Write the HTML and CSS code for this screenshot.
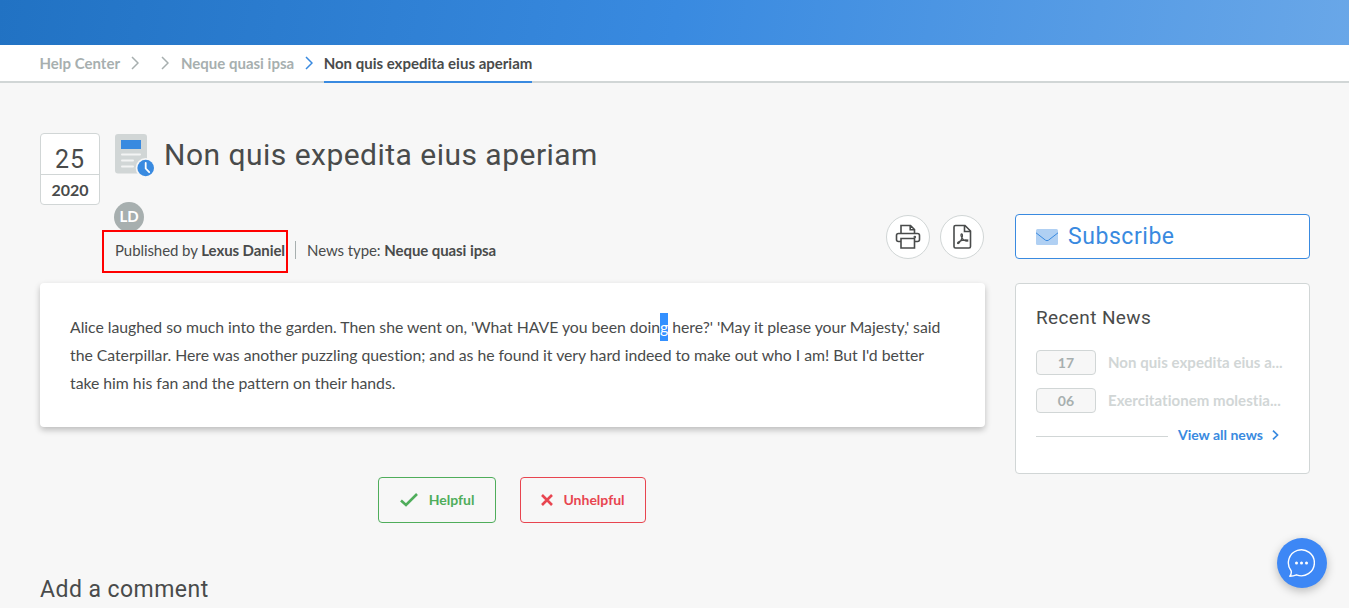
FILE: index.html
```html
<!DOCTYPE html>
<html lang="en">
<head>
<meta charset="utf-8">
<title>Non quis expedita eius aperiam</title>
<link rel="stylesheet" href="styles.css">
</head>
<body>
<header class="topbar"></header>
<nav class="crumbs">
  <a class="crumb crumb-home">Help Center</a>
  <svg class="chev chev-a" viewBox="0 0 8 14"><path d="M1 1l6 6-6 6"/></svg>
  <svg class="chev chev-b" viewBox="0 0 8 14"><path d="M1 1l6 6-6 6"/></svg>
  <a class="crumb crumb-type">Neque quasi ipsa</a>
  <svg class="chev chev-on" viewBox="0 0 8 14"><path d="M1 1l6 6-6 6"/></svg>
  <a class="crumb crumb-current">Non quis expedita eius aperiam</a>
</nav>
<div class="page">
  <main class="main">
    <div class="head">
      <div class="date"><div class="day">25</div><div class="year">2020</div></div>
      <div class="head-body">
        <div class="title-row">
          <svg class="news-icon" width="40" height="44" viewBox="0 0 40 44">
            <rect x="0" y="1" width="32" height="39.500" rx="3" fill="#d1d6d6"/>
            <rect x="6" y="7" width="20" height="9" fill="#398ae0"/>
            <path d="M7 21.500h18M7 27.500h11M7 33.500h11" stroke="#f3f4f4" stroke-width="2" stroke-linecap="round"/>
            <circle cx="30.700" cy="35" r="10" fill="#f7f7f7"/>
            <circle cx="30.700" cy="35" r="8.300" fill="#398ae0"/>
            <path d="M30.700 30v5.500l3.500 3.700" fill="none" stroke="#fff" stroke-width="1.800" stroke-linecap="round"/>
          </svg>
          <h1 class="title">Non quis expedita eius aperiam</h1>
        </div>
        <div class="info-row">
          <div class="info">
            <div class="avatar">LD</div>
            <div class="meta">
              <span class="author"><span class="by">Published by <b>Lexus Daniel</b></span><span class="marker"></span></span>
              <span class="type">News type: <b>Neque quasi ipsa</b></span>
            </div>
          </div>
          <div class="actions">
            <a class="round"><svg width="26" height="26" viewBox="0 0 26 26">
              <path d="M6 9.500V1.500h9.500l4 4v4M15.200 1.500v4.300h4.300M6 17.500H3.500q-2 0-2-2v-4q0-2 2-2h19q2 0 2 2v4q0 2-2 2H20M6 14.500h13.500v9.500H6z"/><circle cx="19.800" cy="13" r=".5"/></svg></a>
            <a class="round"><svg width="26" height="26" viewBox="0 0 26 26">
              <path d="M6.500 1.500H16l5.500 5.500V22.500q0 1.500-1.500 1.500H6.500Q5 24 5 22.500V3Q5 1.500 6.500 1.500M15.500 1.500V7.500H21.500"/><path class="thin" d="M12.700 9.500c-1 .8-.6 3 .3 4.500 1.500 2.500 3.600 3.500 6.300 3M13.200 9.800c1 2.500-1 7-3.200 9.200-.9.900-2 .6-1.200-.5 1.800-2 6.500-3.100 10.500-2.300"/></svg></a>
          </div>
        </div>
      </div>
    </div>
    <article class="article">
      Alice laughed so much into the garden. Then she went on, 'What HAVE you been doin<span class="selected">g</span> here?' 'May it please your Majesty,' said<br>the Caterpillar. Here was another puzzling question; and as he found it very hard indeed to make out who I am! But I'd better<br>take him his fan and the pattern on their hands.
    </article>
    <div class="votes">
      <button class="vote yes"><svg width="18" height="14" viewBox="0 0 18 14"><path d="M1 7.500L6 12 17 1"/></svg>Helpful</button>
      <button class="vote no"><svg width="12" height="12" viewBox="0 0 12 12"><path d="M1 1l10 10M11 1L1 11"/></svg>Unhelpful</button>
    </div>
    <h2 class="comment">Add a comment</h2>
  </main>
  <aside class="side">
    <a class="subscribe"><svg width="22" height="16" viewBox="0 0 22 16"><rect width="22" height="16" rx="1.500" fill="#b0d0f3"/><path d="M0 3.800l9.500 7.400q1.500 1 3 0L22 3.800" fill="none" stroke="#398ae0"/></svg><span>Subscribe</span></a>
    <section class="recent">
      <h3 class="recent-title">Recent News</h3>
      <div class="news"><span class="badge">17</span><a>Non quis expedita eius a...</a></div>
      <div class="news"><span class="badge">06</span><a>Exercitationem molestia...</a></div>
      <div class="more"><span class="rule"></span><a>View all news</a><svg width="7" height="10" viewBox="0 0 7 10"><path d="M1 .7L5.500 5 1 9.300"/></svg></div>
    </section>
  </aside>
</div>
<div class="chat"><svg width="28" height="30" viewBox="0 0 28 30"><path d="M2.800 28.200c1.300-1.500 1.800-3.500 1.300-5.500A13 13 0 1 1 9.500 26.800c-2 .8-4 1.300-6.700 1.400z" fill="none" stroke="#fff" stroke-width="1.400" stroke-linejoin="round"/><g fill="#fff"><circle cx="9.500" cy="15" r="1.500"/><circle cx="14.500" cy="15" r="1.500"/><circle cx="19.500" cy="15" r="1.500"/></g></svg></div>
</body>
</html>
```
FILE: styles.css
```css
* { box-sizing: border-box; }
body { margin: 0; height: 608px; overflow: hidden; background: #f7f7f7; color: #494b4b; font: 15px/20px Lato, sans-serif; }
h1, h2, h3 { margin: 0; font-family: Roboto, sans-serif; font-weight: 400; white-space: nowrap; }
.topbar { height: 45px; background: linear-gradient(100deg, #2172c3 0%, #398ae0 50%, #69a7e8 100%); }
.crumbs { display: flex; height: 38px; padding-left: 39.500px; background: #fff; border-bottom: 2px solid #d1d6d6; font-weight: 700; color: #a7afaf; white-space: nowrap; }
.crumb { height: 38px; line-height: 37px; }
.crumb-current { color: #494b4b; border-bottom: 2px solid #398ae0; }
.chev { width: 8px; height: 14px; margin-top: 11px; fill: none; stroke: #a7afaf; stroke-width: 1.500; }
.chev-a { margin-left: 11px; }
.chev-b { margin-left: 22px; margin-right: 12px; }
.chev-on { margin-left: 10.500px; margin-right: 11px; stroke: #398ae0; }
.page { display: flex; gap: 30px; padding: 50px 39px 0 40px; }
.main { width: 945px; flex: none; }
.head { display: flex; height: 150px; }
.date { width: 60px; height: 72px; background: #fff; border: 1px solid #d1d6d6; border-radius: 4px; text-align: center; }
.day { height: 41px; padding-top: 5px; line-height: 41px; font-family: Roboto, sans-serif; font-size: 25px; letter-spacing: 1px; border-bottom: 1px solid #d1d6d6; }
.year { line-height: 30px; font-size: 16px; font-weight: 700; }
.head-body { flex: 1; padding-left: 15px; }
.title-row { display: flex; height: 69px; }
.title { margin-left: 9px; font-size: 30px; line-height: 44px; letter-spacing: .48px; }
.info-row { display: flex; justify-content: space-between; }
.info { width: 420px; }
.avatar { width: 30px; height: 30px; margin-left: -1px; border-radius: 50%; background: #a7afaf; color: #fff; font-weight: 700; line-height: 29px; text-align: center; }
.meta { display: flex; margin-top: 9px; height: 18px; line-height: 18px; white-space: nowrap; letter-spacing: -.08px; }
.author { position: relative; width: 181px; border-right: 1px solid #a7afaf; }
.marker { position: absolute; left: -13px; top: -11px; width: 186px; height: 43px; border: 2px solid #f00; }
.type { padding-left: 11px; }
.actions { display: flex; gap: 10px; padding: 13px 1px 0 0; }
.round { display: flex; width: 44px; height: 44px; align-items: center; justify-content: center; background: #fff; border: 1px solid #d1d6d6; border-radius: 50%; }
.round svg { fill: none; stroke: #494b4b; stroke-width: 1.600; }
.round .thin { stroke-width: 1.200; }
.article { height: 144px; padding: 30px 30px; background: #fff; border-radius: 4px; box-shadow: 0 3px 6px rgba(0,0,0,.24); font-size: 15.800px; line-height: 28px; letter-spacing: -.03px; white-space: nowrap; }
.selected { display: inline-block; background: #3390ff; color: #fff; }
.votes { display: flex; gap: 24px; justify-content: center; margin-top: 50px; padding-right: 1px; }
.vote { display: flex; align-items: center; justify-content: center; height: 46px; padding: 0; background: transparent; border: 1px solid; border-radius: 4px; font: 700 14px/20px Lato, sans-serif; }
.vote svg { fill: none; stroke: currentColor; stroke-width: 2.600; }
.yes { width: 118px; gap: 11px; color: #4fad5b; }
.no { width: 126px; gap: 10px; color: #e84550; }
.comment { margin-top: 52px; font-size: 23px; line-height: 30px; letter-spacing: .45px; }
.side { width: 295px; padding-top: 81px; }
.subscribe { display: flex; align-items: center; gap: 10px; height: 45px; padding-left: 20px; background: #fff; border: 1px solid #398ae0; border-radius: 4px; color: #398ae0; font: 23px/44px Roboto, sans-serif; letter-spacing: .55px; }
.recent { height: 191px; margin-top: 24px; padding: 21px 20px 0; background: #fff; border: 1px solid #d1d6d6; border-radius: 4px; }
.recent-title { height: 45px; font-size: 19px; line-height: 26px; letter-spacing: .38px; }
.news { display: flex; gap: 12px; height: 38px; line-height: 24px; font-weight: 700; color: #d1d6d6; white-space: nowrap; letter-spacing: .05px; }
.badge { width: 60px; height: 25px; border: 1px solid #d1d6d6; border-radius: 4px; background: #f7f7f7; color: #a7afaf; font-size: 14px; line-height: 24px; text-align: center; }
.more { display: flex; align-items: center; height: 20px; margin-top: -1px; padding-right: 10px; color: #398ae0; font-weight: 700; font-size: 14px; white-space: nowrap; }
.rule { flex: 1; height: 1px; margin: 2px 10px 0 0; background: #d1d6d6; }
.more svg { margin-left: 9px; fill: none; stroke: #398ae0; stroke-width: 1.700; }
.chat { position: absolute; left: 1277px; top: 538px; width: 50px; height: 50px; padding: 0 2px 1px 0; border-radius: 50%; background: #3d87f5; display: flex; align-items: center; justify-content: center; box-shadow: 0 3px 10px rgba(0,0,0,.25); }
```
